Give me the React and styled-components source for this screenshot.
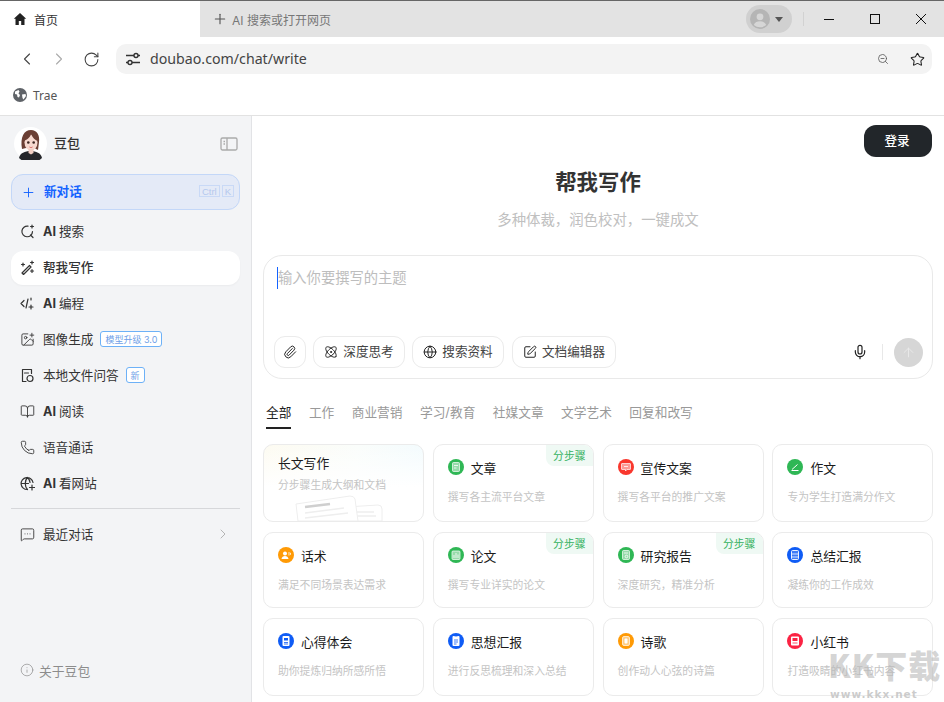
import React from "react";
import styled, { createGlobalStyle } from "styled-components";
import {
  ArrowUp,
  Atom,
  BookOpen,
  ChevronLeft,
  ChevronRight,
  Globe,
  ImagePlus,
  Info,
  MessageSquareMore,
  Mic,
  Paperclip,
  Phone,
  Plus,
  RotateCw,
  SquarePen,
  Star,
  ZoomOut,
} from "lucide-react";

const GlobalStyle = createGlobalStyle`
  html, body {
    margin: 0;
    background: #fff;
  }
  body {
    font-family: "Inter", "Noto Sans CJK SC", sans-serif;
    color: #222;
  }
  * {
    box-sizing: border-box;
  }
`;

const Page = styled.div`
  position: relative;
  width: 944px;
  height: 702px;
  overflow: hidden;
  display: flex;
  flex-direction: column;
`;

const TabBar = styled.div`
  display: flex;
  align-items: stretch;
  height: 37px;
  border-top: 1px solid #666;
  background: #e3e3e3;
`;

const ActiveTab = styled.div`
  width: 200px;
  display: flex;
  align-items: center;
  gap: 7px;
  padding-left: 13px;
  background: #fff;
  font-size: 12px;
  color: #333;
`;

const NewTab = styled.div`
  flex: 1;
  display: flex;
  align-items: center;
  gap: 4px;
  padding-left: 12px;
  font-size: 12px;
  color: #777;
`;

const ProfilePill = styled.div`
  width: 46px;
  height: 28px;
  margin-top: 4px;
  border-radius: 14px;
  background: #d0d0d0;
  display: flex;
  align-items: center;
  gap: 5px;
  padding-left: 4px;
`;

const Separator = styled.div`
  width: 1px;
  height: 14px;
  margin: 11px 2px 0 11px;
  background: #d2d2d2;
`;

const WindowButton = styled.div`
  width: 46px;
  display: flex;
  align-items: center;
  justify-content: center;
  padding-bottom: 1px;
`;

const AddressRow = styled.div`
  height: 44px;
  display: flex;
  align-items: center;
  padding: 0 12px 0 11px;
`;

const NavButton = styled.div`
  width: 32px;
  display: flex;
  align-items: center;
  justify-content: center;
  color: ${(p) => (p.$off ? "#aaa" : "#444")};
`;

const AddressBar = styled.div`
  flex: 1;
  height: 30px;
  margin-left: 9px;
  border-radius: 10px;
  background: #f3f3f3;
  display: flex;
  align-items: center;
  padding: 0 7px 0 9px;
`;

const Url = styled.span`
  flex: 1;
  margin-left: 9px;
  padding-bottom: 2px;
  font-family: "Noto Sans", sans-serif;
  font-size: 14.2px;
  color: #444;
`;

const BookmarkRow = styled.div`
  height: 35px;
  display: flex;
  align-items: center;
  gap: 6px;
  padding: 0 0 6px 13px;
  border-bottom: 1px solid #e2e2e2;
  font-family: "Noto Sans", sans-serif;
  font-size: 12px;
  color: #555;
`;

const Body = styled.div`
  flex: 1;
  display: flex;
  min-height: 0;
`;

const Sidebar = styled.aside`
  width: 252px;
  flex: none;
  display: flex;
  flex-direction: column;
  padding: 11px 11px 0;
  background: #f3f4f6;
  border-right: 1px solid #e2e3e6;
`;

const Brand = styled.div`
  display: flex;
  align-items: center;
  gap: 7px;
  height: 33px;
  padding: 0 2px 0 3px;
  font-size: 13px;
  font-weight: 500;
  color: #333;
`;

const BrandName = styled.span`
  flex: 1;
  padding-bottom: 2px;
`;

const NewChat = styled.div`
  height: 36px;
  margin-top: 14px;
  display: flex;
  align-items: center;
  gap: 8px;
  padding: 0 5px 0 9px;
  border: 1px solid #c3d7f8;
  border-radius: 12px;
  background: #e4eaf7;
  color: #1463ff;
  font-size: 12.6px;
  font-weight: 700;
`;

const NewChatLabel = styled.span`
  flex: 1;
  padding-bottom: 3px;
`;

const KeyGroup = styled.span`
  display: flex;
  gap: 2px;
  margin-bottom: 2px;
`;

const Key = styled.span`
  height: 12px;
  padding: 0 2px;
  display: flex;
  align-items: center;
  border: 1px solid #c9d9f6;
  font-family: "Liberation Sans", sans-serif;
  font-size: 9.5px;
  font-weight: 400;
  color: #b4c8ee;
`;

const NavList = styled.nav`
  display: flex;
  flex-direction: column;
  gap: 2px;
  margin-top: 5px;
`;

const NavItem = styled.div`
  height: 34px;
  display: flex;
  align-items: center;
  gap: 8px;
  padding: 0 0 2px 9px;
  border-radius: 12px;
  font-size: 12.6px;
  color: #333;
  background: ${(p) => (p.$active ? "#fff" : "transparent")};
  box-shadow: ${(p) => (p.$active ? "0 1px 2px rgba(0, 0, 0, 0.04)" : "none")};
  font-weight: ${(p) => (p.$active ? 500 : 400)};
`;

const NavLabel = styled.span`
  margin-bottom: 2px;

  b {
    font-weight: 700;
    margin-right: 3px;
  }
`;

const Tag = styled.span`
  height: 16px;
  margin-left: -1px;
  padding: 0 4px;
  display: flex;
  align-items: center;
  border: 1px solid #6db1f7;
  border-radius: 3px;
  background: #fff;
  color: #6f9fe8;
  font-size: 9px;
`;

const Divider = styled.div`
  height: 1px;
  margin: 7px 0 9px;
  background: #d6d7da;
`;

const Spacer = styled.div`
  flex: 1;
`;

const Trailing = styled.span`
  margin-left: auto;
  padding-right: 9px;
  display: flex;
  color: #aaa;
`;

const About = styled.div`
  height: 20px;
  margin-bottom: 22px;
  display: flex;
  align-items: center;
  gap: 5px;
  padding-left: 9px;
  color: #8c8c8c;
  font-size: 12.8px;
`;

const Main = styled.main`
  flex: 1;
  display: flex;
  flex-direction: column;
  padding: 9px 11px 0 11px;
  min-width: 0;
`;

const TopRow = styled.div`
  display: flex;
  justify-content: flex-end;
  padding-right: 1px;
`;

const Login = styled.button`
  width: 68px;
  height: 32px;
  border: none;
  border-radius: 12px;
  padding: 0 2px 4px 0;
  background: #22262a;
  color: #fff;
  font-family: inherit;
  font-size: 12.6px;
  font-weight: 500;
`;

const Title = styled.h1`
  margin: 9px 0 0;
  height: 32px;
  line-height: 32px;
  text-align: center;
  font-size: 21.4px;
  font-weight: 700;
  color: #333;
`;

const Subtitle = styled.p`
  margin: 12px 0 0;
  height: 20px;
  line-height: 20px;
  text-align: center;
  font-size: 14.4px;
  color: #c0c0c0;
`;

const Composer = styled.div`
  height: 124px;
  margin-top: 25px;
  display: flex;
  flex-direction: column;
  justify-content: space-between;
  padding: 11px 9px 10px 10px;
  border: 1px solid #e9e9e9;
  border-radius: 19px;
`;

const Placeholder = styled.div`
  height: 22px;
  margin-left: 3px;
  border-left: 1px solid #1463ff;
  line-height: 22px;
  font-size: 14.3px;
  color: #bdbdbd;
`;

const ComposerTools = styled.div`
  display: flex;
  align-items: center;
`;

const ToolButton = styled.div`
  height: 32px;
  display: flex;
  align-items: center;
  justify-content: center;
  gap: 5px;
  width: ${(p) => p.$w}px;
  margin-right: ${(p) => p.$gap}px;
  border: 1px solid #ebebeb;
  border-radius: 11px;
  font-size: 12.6px;
  color: #444;
`;

const ToolLabel = styled.span`
  margin-bottom: 4px;
`;

const RightTools = styled.div`
  margin-left: auto;
  display: flex;
  align-items: center;
`;

const ToolDivider = styled.div`
  width: 1px;
  height: 16px;
  margin: 0 11px 0 14px;
  background: #e8e8e8;
`;

const Send = styled.div`
  width: 29px;
  height: 29px;
  border-radius: 50%;
  background: #d6d6d6;
  color: #e9e9e9;
  display: flex;
  align-items: center;
  justify-content: center;
`;

const Tabs = styled.div`
  height: 32px;
  margin-top: 18px;
  padding-left: 3px;
  display: flex;
  gap: 17.5px;
`;

const TabItem = styled.div`
  height: 32px;
  line-height: 31px;
  font-size: 12.7px;
  color: ${(p) => (p.$active ? "#222" : "#999")};
  border-bottom: 2px solid ${(p) => (p.$active ? "#222" : "transparent")};
  white-space: nowrap;
`;

const CardGrid = styled.div`
  margin-top: 15px;
  display: grid;
  grid-template-columns: repeat(4, 161px);
  grid-template-rows: 78px 76px 78px;
  column-gap: 8.8px;
  row-gap: 10px;
`;

const Card = styled.div`
  position: relative;
  overflow: hidden;
  display: flex;
  flex-direction: column;
  padding: 13px 14px 0;
  border: 1px solid #ebebeb;
  border-radius: 10px;
  background: ${(p) =>
    p.$long
      ? "linear-gradient(to bottom, rgba(255, 255, 255, 0) 0%, #fff 55%), linear-gradient(100deg, #fdfbf1 0%, #fafdfb 55%, #f2fbfe 100%)"
      : "#fff"};
`;

const CardHead = styled.div`
  display: flex;
  align-items: center;
  gap: 7px;
  height: 18px;
  font-size: 12.8px;
  color: #1a1a1a;
`;

const LongTitle = styled.div`
  height: 18px;
  margin-top: -3px;
  font-size: 12.8px;
  line-height: 18px;
  color: #1a1a1a;
`;

const CardIcon = styled.span`
  width: 16px;
  height: 16px;
  flex: none;
  border-radius: 50%;
  background: ${(p) => p.$color};
  display: flex;
`;

const CardDesc = styled.div`
  margin-top: ${(p) => (p.$long ? 5 : 14)}px;
  font-size: 10.8px;
  line-height: 16px;
  color: #c4c4c4;
  white-space: nowrap;
`;

const StepBadge = styled.span`
  position: absolute;
  top: 0;
  right: 0;
  width: 47px;
  height: 21px;
  display: flex;
  align-items: center;
  justify-content: center;
  padding-bottom: 2px;
  border-radius: 0 0 0 8px;
  background: #eff9f4;
  color: #35b160;
  font-size: 10.8px;
`;

const DocArt = styled.svg`
  position: absolute;
  left: 30px;
  bottom: 0;
`;

const Watermark = styled.div`
  position: absolute;
  left: 828px;
  top: 644px;
  display: flex;
  flex-direction: column;
  pointer-events: none;
`;

const WatermarkLogo = styled.span`
  font-family: "Noto Sans CJK SC", sans-serif;
  font-size: 32px;
  line-height: 40px;
  font-weight: 900;
  letter-spacing: 1px;
  color: rgba(185, 185, 185, 0.62);
  white-space: nowrap;
`;

const WatermarkUrl = styled.span`
  margin: 3px 0 0 2px;
  font-family: "DejaVu Sans", sans-serif;
  font-size: 10.5px;
  line-height: 14px;
  font-weight: 700;
  letter-spacing: 1px;
  color: rgba(195, 195, 195, 0.85);
`;

const Avatar = () => (
  <svg width="33" height="33" viewBox="0 0 33 33">
    <circle cx="16.500" cy="16.500" r="16.500" fill="#fff" />
    <path d="M5 31c1-5 6-7 11.500-7S27 26 28 31a16.500 16.500 0 0 1-23 0z" fill="#26272b" />
    <path d="M8 22C6 10 10 3 17 3c6 0 9 5 8 12l-1 8-4-2H12z" fill="#6b3f34" />
    <ellipse cx="17" cy="15.500" rx="6.500" ry="8" fill="#f7d9cf" />
    <path d="M14.500 22h5v4l-2.500 1.500-2.500-1.500z" fill="#f2cfc4" />
    <path d="M10 14c2-1 6-3 7-7 2 4 4 6 6.500 7 0-6-2-9-6.500-9s-7 3-7 9z" fill="#6b3f34" />
    <circle cx="14.300" cy="15.500" r="1.300" fill="#3a2420" />
    <circle cx="19.700" cy="15.500" r="1.300" fill="#3a2420" />
    <path d="M15.500 20c1 .7 2.200.7 3 0" stroke="#d8605f" strokeWidth="1" fill="none" />
  </svg>
);

const HomeIcon = () => (
  <svg width="14" height="14" viewBox="0 0 14 14">
    <path d="M7 1 .8 6.800h1.700V13h3.300V9h2.400v4h3.300V6.800h1.700z" fill="#222" />
  </svg>
);

const TuneIcon = () => (
  <svg width="16" height="16" viewBox="0 0 16 16" fill="none" stroke="#333" strokeWidth="1.400">
    <path d="M1 4.500h8M13 4.500h2M1 11.500h2M7 11.500h8" />
    <circle cx="11" cy="4.500" r="2" />
    <circle cx="5" cy="11.500" r="2" />
  </svg>
);

const EarthIcon = () => (
  <svg width="14" height="14" viewBox="0 0 14 14">
    <circle cx="7" cy="7" r="7" fill="#5f6368" />
    <path d="M2 3.500 5.500 2l1 1.500-1 2 1.500 1.500-1 2.500-1.500-.5-.5-2.500L2 6zM9 6.500l3.500-.5.500 2-2.500 3.500-1-1.500z" fill="#fff" />
  </svg>
);

const PersonIcon = () => (
  <svg width="20" height="20" viewBox="0 0 20 20">
    <circle cx="10" cy="10" r="10" fill="#b5b5b5" />
    <circle cx="10" cy="7.800" r="3.400" fill="#d6d6d6" />
    <path d="M3.800 16c1-2.800 3.400-3.800 6.200-3.800s5.200 1 6.200 3.800a9.500 9.500 0 0 1-12.400 0z" fill="#d6d6d6" />
  </svg>
);

const CaretIcon = () => (
  <svg width="8" height="5" viewBox="0 0 8 5">
    <path d="M0 0h8L4 5z" fill="#555" />
  </svg>
);

const MinIcon = () => (
  <svg width="12" height="12" viewBox="0 0 12 12">
    <path d="M1 6.500h10" stroke="#111" strokeWidth="1" />
  </svg>
);

const MaxIcon = () => (
  <svg width="12" height="12" viewBox="0 0 12 12" fill="none">
    <rect x="1.500" y="1.500" width="9" height="9" stroke="#111" />
  </svg>
);

const CloseIcon = () => (
  <svg width="12" height="12" viewBox="0 0 12 12">
    <path d="M1 1l10 10M11 1 1 11" stroke="#111" strokeWidth="1" />
  </svg>
);

const PanelIcon = () => (
  <svg width="18" height="16" viewBox="0 0 18 16" fill="none" stroke="#aaa" strokeWidth="1.300">
    <rect x="1" y="2" width="16" height="12" rx="1.500" />
    <path d="M7 2v12M3.500 5.500h1.500M3.500 8h1.500" />
  </svg>
);

const Sparkled = ({ children }) => (
  <svg width="15" height="15" viewBox="0 0 15 15" fill="none" stroke="#333" strokeWidth="1.200" strokeLinecap="round" strokeLinejoin="round">
    {children}
  </svg>
);

const spark = "M12 1v3M10.500 2.500h3";

const SearchSpark = () => (
  <Sparkled>
    <path d="M8 2.200A5.300 5.300 0 1 0 12.500 7.500M10.500 11l2.500 2.500" />
    <path d={spark} />
  </Sparkled>
);

const PenSpark = () => (
  <Sparkled>
    <path d="M2 13 9.500 5.500l1.500 1.500L3.500 14.500zM3 3v3M1.500 4.500h3M12 9.500v3M10.500 11h3" />
    <path d={spark} />
  </Sparkled>
);

const CodeSpark = () => (
  <Sparkled>
    <path d="M4 4.500 1 7.500l3 3M6 12l2-9M11 9v4M9 11h4M11 2v2" />
  </Sparkled>
);

const FileSpark = () => (
  <Sparkled>
    <path d="M6 13.500H2.500V1.500h9v4M4.500 5h4" />
    <circle cx="10" cy="10.500" r="3" />
  </Sparkled>
);

const GlobeSpark = () => (
  <Sparkled>
    <path d="M13 6.500A6 6 0 1 0 7.500 13.500M1.500 7.500h7M7.500 1.500c-3 3-3 9 0 12M7.500 1.500c1.800 1.800 2.500 3.500 2.500 5" />
    <path d="M12 9v5M9.500 11.500h5" />
  </Sparkled>
);

const glyphTile = { fill: "#fff", fillOpacity: 0.5, stroke: "#fff", strokeWidth: 0.7 };
const glyphLine = { stroke: "#fff", strokeWidth: 0.8, fill: "none" };

// small white drawings that sit inside the round card icons
const glyphs = {
  doc: (
    <>
      <rect x="4.500" y="3.500" width="7" height="9" rx="1" {...glyphTile} />
      <path d="M6 6.500h4M6 9h2.500" {...glyphLine} />
    </>
  ),
  bubble: (
    <>
      <path d="M4 4.500h8a.5.5 0 0 1 .5.5v5a.5.5 0 0 1-.5.5H9l-1.500 1.500V10.500H4a.5.5 0 0 1-.5-.5V5a.5.5 0 0 1 .5-.5z" {...glyphTile} />
      <path d="M6 7.500h4" {...glyphLine} />
    </>
  ),
  pen: <path d="M4.500 11.500h7M5 10.500l5.500-5" stroke="#fff" strokeWidth="1" fill="none" />,
  speaker: (
    <>
      <circle cx="7" cy="6.500" r="2" fill="#fff" />
      <path d="M3.500 12c.3-2 1.700-3 3.500-3s3.200 1 3.500 3z" fill="#fff" />
      <path d="M11 5v3.500M12.500 5.800v2" {...glyphLine} />
    </>
  ),
  chart: (
    <>
      <rect x="4" y="4" width="8" height="8.500" rx="1" {...glyphTile} />
      <path d="M6 11V8M8 11V6M10 11V7.500" {...glyphLine} />
    </>
  ),
  report: (
    <>
      <rect x="4.500" y="3.500" width="7" height="9" rx="1" {...glyphTile} />
      <circle cx="8.500" cy="9.500" r="1.300" {...glyphLine} />
      <path d="M6 6h4" {...glyphLine} />
    </>
  ),
  summary: (
    <>
      <rect x="4.500" y="3.500" width="7" height="9" rx="1" fill="#fff" fillOpacity="0.2" stroke="#fff" strokeWidth="0.9" />
      <path d="M4.500 7h7M4.500 10h7" {...glyphLine} />
    </>
  ),
  card: (
    <>
      <rect x="4.500" y="3" width="7" height="10" rx="1" fill="#fff" />
      <rect x="6" y="5" width="4" height="2.500" fill="#0f5cf5" />
      <path d="M6 9.500h4M6 11h4" stroke="#0f5cf5" strokeWidth="0.8" />
    </>
  ),
  clip: (
    <>
      <rect x="4.500" y="3" width="7" height="10" rx="1" fill="#fff" />
      <path d="M6.500 3h3M6 7h4M6 9h4M6 11h2.500" stroke="#0f5cf5" strokeWidth="0.8" />
    </>
  ),
  poem: (
    <>
      <rect x="4.500" y="3.500" width="7" height="9" rx="1.500" {...glyphTile} />
      <rect x="6.500" y="5.500" width="3" height="5" rx="1" fill="#fff" />
    </>
  ),
  book: (
    <>
      <rect x="4" y="3.500" width="8" height="9" rx="1" fill="#fff" />
      <rect x="5.500" y="5" width="5" height="3" fill="#fb2343" />
      <path d="M5.500 10h5" stroke="#fb2343" strokeWidth="0.8" />
    </>
  ),
};

const navIconProps = { size: 15, strokeWidth: 1.4, color: "#333" };

const navItems = [
  { icon: <SearchSpark />, ai: true, label: "搜索" },
  { icon: <PenSpark />, label: "帮我写作", active: true },
  { icon: <CodeSpark />, ai: true, label: "编程" },
  { icon: <ImagePlus {...navIconProps} />, label: "图像生成", tag: "模型升级 3.0" },
  { icon: <FileSpark />, label: "本地文件问答", tag: "新" },
  { icon: <BookOpen {...navIconProps} />, ai: true, label: "阅读" },
  { icon: <Phone {...navIconProps} />, label: "语音通话" },
  { icon: <GlobeSpark />, ai: true, label: "看网站" },
];

const tabs = ["全部", "工作", "商业营销", "学习/教育", "社媒文章", "文学艺术", "回复和改写"];

const GREEN = "#2fb755";
const BLUE = "#0f5cf5";
const ORANGE = "#ff9a05";

const cards = [
  { glyph: "doc", color: GREEN, title: "文章", desc: "撰写各主流平台文章", steps: true },
  { glyph: "bubble", color: "#f9372d", title: "宣传文案", desc: "撰写各平台的推广文案" },
  { glyph: "pen", color: GREEN, title: "作文", desc: "专为学生打造满分作文" },
  { glyph: "speaker", color: ORANGE, title: "话术", desc: "满足不同场景表达需求" },
  { glyph: "chart", color: GREEN, title: "论文", desc: "撰写专业详实的论文", steps: true },
  { glyph: "report", color: GREEN, title: "研究报告", desc: "深度研究，精准分析", steps: true },
  { glyph: "summary", color: BLUE, title: "总结汇报", desc: "凝练你的工作成效" },
  { glyph: "card", color: BLUE, title: "心得体会", desc: "助你提炼归纳所感所悟" },
  { glyph: "clip", color: BLUE, title: "思想汇报", desc: "进行反思梳理和深入总结" },
  { glyph: "poem", color: ORANGE, title: "诗歌", desc: "创作动人心弦的诗篇" },
  { glyph: "book", color: "#fb2343", title: "小红书", desc: "打造吸睛的小红书内容" },
];

const App = () => (
  <Page>
    <GlobalStyle />
    <TabBar>
      <ActiveTab>
        <HomeIcon />
        首页
      </ActiveTab>
      <NewTab>
        <Plus size={16} strokeWidth={1.7} color="#555" />
        AI 搜索或打开网页
      </NewTab>
      <ProfilePill>
        <PersonIcon />
        <CaretIcon />
      </ProfilePill>
      <Separator />
      <WindowButton>
        <MinIcon />
      </WindowButton>
      <WindowButton>
        <MaxIcon />
      </WindowButton>
      <WindowButton>
        <CloseIcon />
      </WindowButton>
    </TabBar>

    <AddressRow>
      <NavButton>
        <ChevronLeft size={20} strokeWidth={1.3} />
      </NavButton>
      <NavButton $off>
        <ChevronRight size={20} strokeWidth={1.3} />
      </NavButton>
      <NavButton>
        <RotateCw size={17} strokeWidth={1.5} />
      </NavButton>
      <AddressBar>
        <TuneIcon />
        <Url>doubao.com/chat/write</Url>
        <ZoomOut size={12} strokeWidth={1.6} color="#555" />
        <Star size={15} strokeWidth={1.7} color="#222" style={{ marginLeft: 21 }} />
      </AddressBar>
    </AddressRow>

    <BookmarkRow>
      <EarthIcon />
      Trae
    </BookmarkRow>

    <Body>
      <Sidebar>
        <Brand>
          <Avatar />
          <BrandName>豆包</BrandName>
          <PanelIcon />
        </Brand>
        <NewChat>
          <Plus size={15} strokeWidth={1.5} />
          <NewChatLabel>新对话</NewChatLabel>
          <KeyGroup>
            <Key>Ctrl</Key>
            <Key>K</Key>
          </KeyGroup>
        </NewChat>
        <NavList>
          {navItems.map((item) => (
            <NavItem key={item.label} $active={item.active}>
              {item.icon}
              <NavLabel>
                {item.ai && <b>AI</b>}
                {item.label}
              </NavLabel>
              {item.tag && <Tag>{item.tag}</Tag>}
            </NavItem>
          ))}
        </NavList>
        <Divider />
        <NavItem>
          <MessageSquareMore {...navIconProps} />
          <NavLabel>最近对话</NavLabel>
          <Trailing>
            <ChevronRight size={16} strokeWidth={1.3} />
          </Trailing>
        </NavItem>
        <Spacer />
        <About>
          <Info size={14} strokeWidth={1.2} />
          关于豆包
        </About>
      </Sidebar>

      <Main>
        <TopRow>
          <Login>登录</Login>
        </TopRow>
        <Title>帮我写作</Title>
        <Subtitle>多种体裁，润色校对，一键成文</Subtitle>

        <Composer>
          <Placeholder>输入你要撰写的主题</Placeholder>
          <ComposerTools>
            <ToolButton $w={32} $gap={7}>
              <Paperclip size={14} strokeWidth={1.7} color="#222" />
            </ToolButton>
            <ToolButton $w={92} $gap={7}>
              <Atom size={14} strokeWidth={1.7} color="#222" />
              <ToolLabel>深度思考</ToolLabel>
            </ToolButton>
            <ToolButton $w={92} $gap={8}>
              <Globe size={14} strokeWidth={1.7} color="#222" />
              <ToolLabel>搜索资料</ToolLabel>
            </ToolButton>
            <ToolButton $w={104} $gap={0}>
              <SquarePen size={14} strokeWidth={1.7} color="#222" />
              <ToolLabel>文档编辑器</ToolLabel>
            </ToolButton>
            <RightTools>
              <Mic size={16} strokeWidth={1.8} color="#222" />
              <ToolDivider />
              <Send>
                <ArrowUp size={15} strokeWidth={1.5} />
              </Send>
            </RightTools>
          </ComposerTools>
        </Composer>

        <Tabs>
          {tabs.map((tab, i) => (
            <TabItem key={tab} $active={i === 0}>
              {tab}
            </TabItem>
          ))}
        </Tabs>

        <CardGrid>
          <Card $long>
            <LongTitle>长文写作</LongTitle>
            <CardDesc $long>分步骤生成大纲和文档</CardDesc>
            <DocArt width="90" height="26" viewBox="0 0 90 26">
              <path d="M52 12 84 10q4 0 4 4v12H52z" fill="#fff" stroke="#eee" />
              <path d="M60 17h20M60 21h22" stroke="#eee" strokeWidth="1.500" />
              <path d="M2 9 56 1q4 0 5 3l3 22H4z" fill="#fff" stroke="#eee" />
              <path d="M11 12 36 9" stroke="#cfcfcf" strokeWidth="2.500" />
              <path d="M11 18 50 13M11 23 54 18" stroke="#eee" strokeWidth="1.500" />
            </DocArt>
          </Card>
          {cards.map(({ glyph, color, title, desc, steps }) => (
            <Card key={title}>
              {steps && <StepBadge>分步骤</StepBadge>}
              <CardHead>
                <CardIcon $color={color}>
                  <svg width="16" height="16" viewBox="0 0 16 16">
                    {glyphs[glyph]}
                  </svg>
                </CardIcon>
                {title}
              </CardHead>
              <CardDesc>{desc}</CardDesc>
            </Card>
          ))}
        </CardGrid>
      </Main>
    </Body>

    <Watermark>
      <WatermarkLogo>KK下载</WatermarkLogo>
      <WatermarkUrl>www.kkx.net</WatermarkUrl>
    </Watermark>
  </Page>
);

export default App;
